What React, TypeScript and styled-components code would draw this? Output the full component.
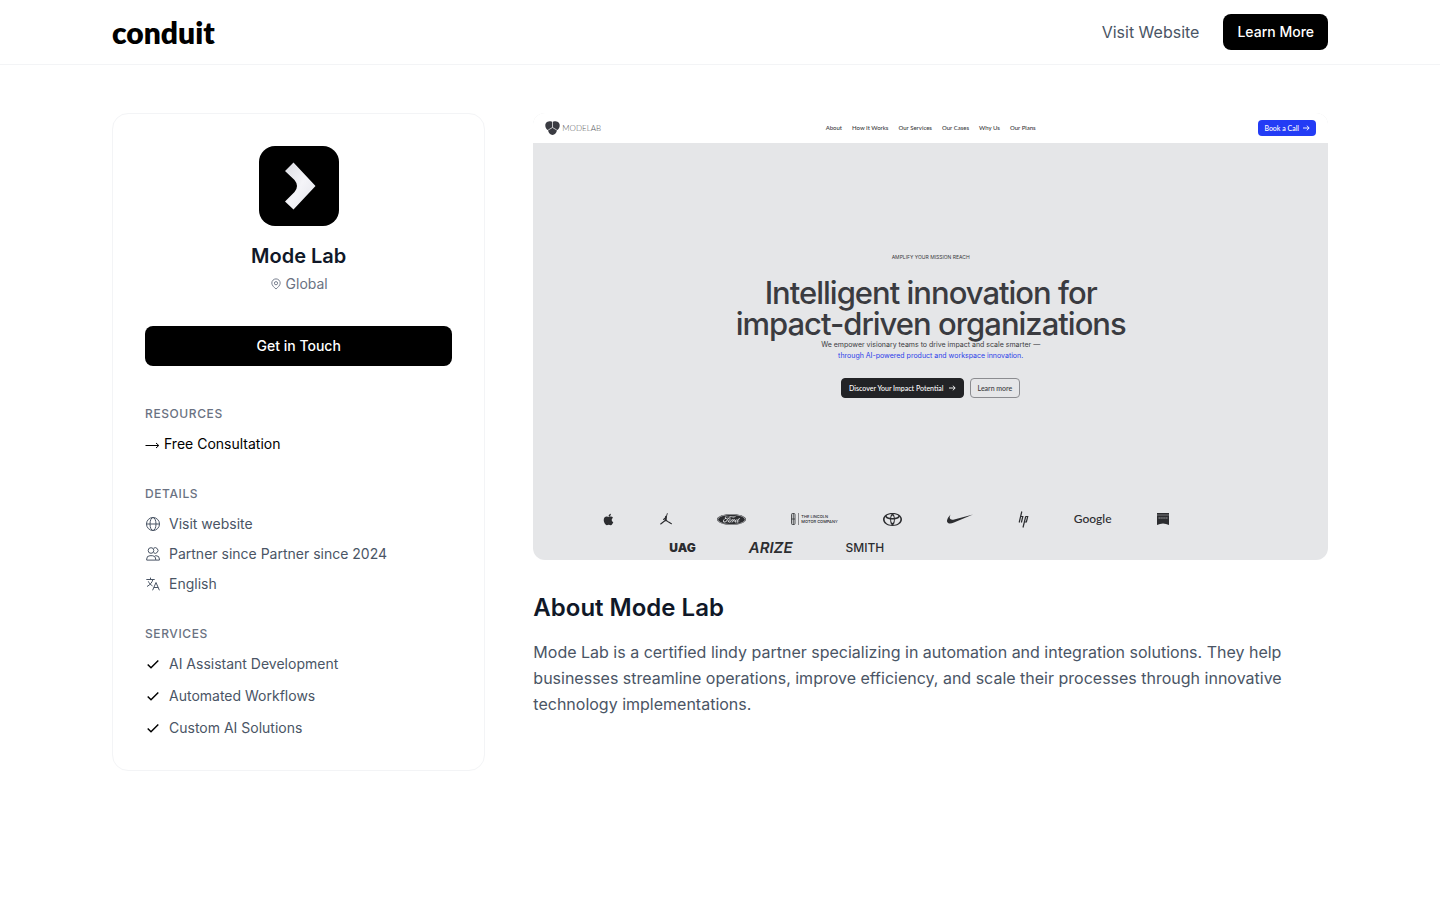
import React from "react";
import styled, { createGlobalStyle } from "styled-components";
import { FaApple } from "react-icons/fa";
import { SiFord, SiToyota, SiNike } from "react-icons/si";

const GlobalStyle = createGlobalStyle`
  *, *::before, *::after { box-sizing: border-box; }
  body {
    margin: 0;
    background: #fff;
    color: #101828;
    font-family: Inter, "Liberation Sans", sans-serif;
  }
  h1, h2, h3, p, ul { margin: 0; padding: 0; }
  ul { list-style: none; }
  a { color: inherit; text-decoration: none; }
  button { font-family: inherit; border: 0; cursor: pointer; }
  svg { display: block; flex: none; }
`;

const SiteHeader = styled.header`
  border-bottom: 1px solid #f3f4f6;
`;

const Container = styled.div`
  max-width: 1280px;
  margin: 0 auto;
  padding: 0 32px;
`;

const HeaderBar = styled(Container)`
  height: 64px;
  display: flex;
  align-items: center;
  justify-content: space-between;
`;

const Wordmark = styled.a`
  font-family: Lato, sans-serif;
  font-size: 30px;
  line-height: 32px;
  font-weight: 800;
  color: #000;
`;

const HeaderActions = styled.nav`
  display: flex;
  align-items: center;
  gap: 24px;
`;

const HeaderLink = styled.a`
  font-size: 16px;
  line-height: 24px;
  color: #4a5565;
`;

const SolidButton = styled.button<{ $wide?: boolean }>`
  width: ${(p) => (p.$wide ? "100%" : "auto")};
  height: ${(p) => (p.$wide ? "40px" : "36px")};
  padding: 0 14px;
  border-radius: 8px;
  background: #000;
  color: #fff;
  font-size: 14px;
  line-height: 20px;
  font-weight: 500;
`;

const Page = styled(Container)`
  padding-top: 48px;
  padding-bottom: 48px;
  display: grid;
  grid-template-columns: repeat(3, minmax(0, 1fr));
  gap: 48px;
  align-items: start;
`;

const ProfileCard = styled.aside`
  border: 1px solid #f3f4f6;
  border-radius: 16px;
  padding: 32px;
  display: flex;
  flex-direction: column;
  gap: 32px;
`;

const Identity = styled.div`
  display: flex;
  flex-direction: column;
  align-items: center;
`;

const Avatar = styled.div`
  width: 80px;
  height: 80px;
  border-radius: 16px;
  background: #000;
  overflow: hidden;
`;

const PartnerName = styled.h1`
  margin-top: 16px;
  font-size: 20px;
  line-height: 28px;
  font-weight: 600;
`;

const Location = styled.p`
  margin-top: 4px;
  display: flex;
  align-items: center;
  gap: 4px;
  font-size: 14px;
  line-height: 20px;
  color: #6a7282;
`;

const Group = styled.section<{ $first?: boolean }>`
  margin-top: ${(p) => (p.$first ? "8px" : "0")};
`;

const GroupTitle = styled.h3`
  margin-bottom: 12px;
  font-size: 12px;
  line-height: 16px;
  font-weight: 500;
  letter-spacing: 0.05em;
  text-transform: uppercase;
  color: #6a7282;
`;

const ItemList = styled.ul<{ $gap: number }>`
  display: flex;
  flex-direction: column;
  gap: ${(p) => p.$gap}px;
`;

const Item = styled.li`
  display: flex;
  align-items: center;
  gap: 8px;
  font-size: 14px;
  line-height: 20px;
  color: #4a5565;
`;

const ResourceLink = styled.a`
  display: flex;
  align-items: center;
  gap: 4px;
  font-size: 14px;
  line-height: 20px;
  color: #000;
`;

const Main = styled.main`
  grid-column: span 2;
`;

const Preview = styled.div`
  aspect-ratio: 16 / 9;
  border-radius: 12px;
  overflow: hidden;
  display: flex;
  flex-direction: column;
  background: #e5e6e8;
  color: #3a3b40;
`;

const PreviewBar = styled.div`
  height: 30px;
  flex: none;
  padding: 0 12px;
  display: grid;
  grid-template-columns: 1fr auto 1fr;
  align-items: center;
  background: #fff;
  font-family: Lato, sans-serif;
`;

const PreviewBrand = styled.div`
  display: flex;
  align-items: center;
  gap: 2px;
  font-size: 8px;
  line-height: 12px;
  font-weight: 300;
  color: #55565a;
`;

const PreviewNav = styled.div`
  display: flex;
  gap: 10px;
  font-size: 6px;
  line-height: 10px;
  font-weight: 500;
`;

const CallButton = styled.button`
  justify-self: end;
  height: 16px;
  padding: 0 6px;
  display: flex;
  align-items: center;
  gap: 4px;
  border-radius: 4px;
  background: #233cf5;
  color: #fff;
  font-size: 7px;
  line-height: 10px;
  font-weight: 500;
`;

const Hero = styled.div`
  padding-top: 109px;
  display: flex;
  flex-direction: column;
  align-items: center;
  text-align: center;
`;

const Eyebrow = styled.p`
  font-size: 5px;
  line-height: 10px;
`;

const Headline = styled.h2`
  margin-top: 15px;
  font-size: 31px;
  line-height: 31px;
  font-weight: 500;
  letter-spacing: -1px;
`;

const Tagline = styled.p`
  font-size: 7px;
  line-height: 11px;
`;

const Accent = styled.span`
  display: block;
  color: #2b40e8;
`;

const HeroActions = styled.div`
  margin-top: 17px;
  display: flex;
  gap: 6px;
`;

const HeroButton = styled.button<{ $outline?: boolean }>`
  height: 20px;
  padding: 0 7px;
  display: flex;
  align-items: center;
  gap: 5px;
  border: 1px solid ${(p) => (p.$outline ? "#8b8c90" : "#222326")};
  border-radius: 4px;
  background: ${(p) => (p.$outline ? "transparent" : "#222326")};
  color: ${(p) => (p.$outline ? "#3a3b40" : "#fff")};
  font-family: Lato, sans-serif;
  font-size: 7px;
  line-height: 10px;
  font-weight: 500;
`;

const Clients = styled.div`
  margin-top: 112px;
  display: flex;
  flex-direction: column;
  gap: 14px;
  color: #2c2d30;
`;

const ClientRow = styled.div<{ $indent: number; $gap: number; $height: number }>`
  height: ${(p) => p.$height}px;
  padding-left: ${(p) => p.$indent}px;
  display: flex;
  align-items: center;
  gap: ${(p) => p.$gap}px;
`;

const LincolnName = styled.span`
  font-size: 4px;
  line-height: 5px;
  font-weight: 500;
`;

const Lincoln = styled.span`
  display: flex;
  align-items: center;
  gap: 2px;
`;

const ClientName = styled.span<{ $size: number; $italic?: boolean; $weight: number; $family?: string }>`
  font-family: ${(p) => p.$family || "Inter"}, sans-serif;
  font-size: ${(p) => p.$size}px;
  line-height: 12px;
  font-weight: ${(p) => p.$weight};
  font-style: ${(p) => (p.$italic ? "italic" : "normal")};
`;

const AboutTitle = styled.h2`
  margin-top: 32px;
  font-size: 24px;
  line-height: 32px;
  font-weight: 600;
`;

const AboutText = styled.p`
  margin-top: 15px;
  font-size: 16px;
  line-height: 26px;
  color: #4a5565;
`;

const PinIcon = () => (
  <svg width="12" height="12" viewBox="0 0 12 12" fill="none" stroke="currentColor" strokeWidth="0.9">
    <path d="M6 11C4.2 9.4 1.8 7.4 1.8 5.1a4.2 4.2 0 0 1 8.4 0C10.2 7.4 7.8 9.4 6 11Z" />
    <circle cx="6" cy="5.2" r="1.6" />
  </svg>
);

const GlobeIcon = () => (
  <svg width="16" height="16" viewBox="0 0 16 16" fill="none" stroke="currentColor">
    <circle cx="8" cy="8" r="6.5" />
    <ellipse cx="8" cy="8" rx="3" ry="6.5" />
    <path d="M1.5 8h13" />
  </svg>
);

const PeopleIcon = () => (
  <svg width="16" height="16" viewBox="0 0 16 16" fill="none" stroke="currentColor" strokeLinejoin="round">
    <circle cx="6" cy="4.5" r="2.8" />
    <path d="M8.6 2.2a2.8 2.8 0 1 1 0 4.6" />
    <path d="M1.7 14.1v-1.1A3.300 3.300 0 0 1 5 9.700h2.400a3.300 3.300 0 0 1 3.300 3.300v1.100Z" />
    <path d="M10.700 14.100h3.700v-1.100a3.300 3.300 0 0 0-3.300-3.300h-.9" />
  </svg>
);

const TranslateIcon = () => (
  <svg width="16" height="16" viewBox="0 0 16 16" fill="none" stroke="currentColor">
    <path d="M1.3 3.5h8.400M5.500 1.600v1.900M7.900 3.500C7.200 6.600 4.900 8.900 2 10.500M3.300 5.300c.9 2 2.300 3.500 4.200 4.600" />
    <path d="M7.600 14.300l3.400-7.800 3.400 7.800M8.800 11.500h4.400" />
  </svg>
);

const CheckIcon = () => (
  <svg width="16" height="16" viewBox="0 0 16 16" fill="none" stroke="#000" strokeWidth="1.5">
    <path d="M2.700 8.500l3.300 3.200 7.300-7.200" />
  </svg>
);

const ResourceArrow = () => (
  <svg width="15" height="12" viewBox="0 0 15 12" fill="none" stroke="currentColor">
    <path d="M0.500 7.500h13M11 5l2.800 2.500L11 10" />
  </svg>
);

const SmallArrow = () => (
  <svg width="7" height="6" viewBox="0 0 7 6" fill="none" stroke="currentColor" strokeWidth="0.9">
    <path d="M0 3h6M3.800 0.700L6.200 3 3.800 5.300" />
  </svg>
);

const ModeLabMark = () => (
  <svg width="80" height="80" viewBox="0 0 80 80">
    <defs>
      <linearGradient id="markShade" x1="0" y1="0" x2="1" y2="1">
        <stop offset="0" stopColor="#dcdde3" />
        <stop offset="0.5" stopColor="#f4f4f8" />
        <stop offset="1" stopColor="#e2e3ea" />
      </linearGradient>
    </defs>
    <path d="M34.500 16.500L56.500 40 34.500 63.500 26 55.500 35.500 46Q40.500 40 35.500 34L26 25Z" fill="url(#markShade)" />
  </svg>
);

const TrefoilMark = () => (
  <svg width="15" height="14" viewBox="0 0 15 14">
    <path
      d="M4.500 0.300Q6.400 0 7.500 0.900 8.600 0 10.500 0.300C13.600 0.400 15 2.600 14.700 5 14.500 7.400 13 8.700 12 9.100 11.600 12.300 9.800 13.900 7.500 13.900S3.400 12.300 3 9.100C2 8.700 0.500 7.400 0.300 5 0 2.600 1.400 0.400 4.500 0.300Z"
      fill="#3a3b42"
    />
    <path d="M7.500 0.500v6M7.500 6.500L3.200 9M7.500 6.500L11.800 9" stroke="#fff" strokeWidth="0.7" />
  </svg>
);

const JumpmanMark = () => (
  <svg width="12" height="12" viewBox="0 0 12 12" fill="none" stroke="currentColor" strokeLinecap="round">
    <path d="M7.300 0.600L6.200 4" strokeWidth="0.9" />
    <path d="M6 3.600L5.700 7.300" strokeWidth="1.9" />
    <path d="M5.500 7.300L0.700 11M6 7.300l2.600 1.800 2.800 1.600M5.300 5L3.600 6.500" strokeWidth="1.1" />
  </svg>
);

const LincolnMark = () => (
  <svg width="8" height="12" viewBox="0 0 8 12" fill="none" stroke="currentColor">
    <rect x="0.5" y="0.5" width="3.5" height="11" rx="1" strokeWidth="0.8" />
    <path d="M2.250 0.500v11M0.500 6h3.500" strokeWidth="0.8" />
    <path d="M7.500 0v12" strokeWidth="0.5" />
  </svg>
);

const HpMark = () => (
  <svg width="11" height="17" viewBox="0 0 11 17" fill="none" stroke="currentColor" strokeWidth="1.2">
    <path d="M3.800 0.500L1.200 11.500M2.800 5.500h2L3.400 11.500M7.700 5.500L5 16.500M7.700 5.500h2L8.400 11H6.500" />
  </svg>
);

const ZeissMark = () => (
  <svg width="12" height="12" viewBox="0 0 12 12">
    <path d="M0 0h12v12Q6 9 0 12Z" fill="currentColor" />
    <path d="M0 2h12" stroke="#e5e6e8" strokeWidth="0.4" />
    <path d="M1.500 5h9" stroke="#a4a5a8" strokeWidth="1.2" strokeDasharray="1.4 0.5" />
  </svg>
);

const navItems = ["About", "How It Works", "Our Services", "Our Cases", "Why Us", "Our Plans"];
const services = ["AI Assistant Development", "Automated Workflows", "Custom AI Solutions"];

export default function App() {
  return (
    <>
      <GlobalStyle />
      <SiteHeader>
        <HeaderBar>
          <Wordmark href="#">conduit</Wordmark>
          <HeaderActions>
            <HeaderLink href="#">Visit Website</HeaderLink>
            <SolidButton>Learn More</SolidButton>
          </HeaderActions>
        </HeaderBar>
      </SiteHeader>
      <Page>
        <ProfileCard>
          <Identity>
            <Avatar>
              <ModeLabMark />
            </Avatar>
            <PartnerName>Mode Lab</PartnerName>
            <Location>
              <PinIcon />
              Global
            </Location>
          </Identity>
          <SolidButton $wide>Get in Touch</SolidButton>
          <Group $first>
            <GroupTitle>Resources</GroupTitle>
            <ResourceLink href="#">
              <ResourceArrow />
              Free Consultation
            </ResourceLink>
          </Group>
          <Group>
            <GroupTitle>Details</GroupTitle>
            <ItemList $gap={10}>
              <Item>
                <GlobeIcon />
                <a href="#">Visit website</a>
              </Item>
              <Item>
                <PeopleIcon />
                Partner since Partner since 2024
              </Item>
              <Item>
                <TranslateIcon />
                English
              </Item>
            </ItemList>
          </Group>
          <Group>
            <GroupTitle>Services</GroupTitle>
            <ItemList $gap={12}>
              {services.map((s) => (
                <Item key={s}>
                  <CheckIcon />
                  {s}
                </Item>
              ))}
            </ItemList>
          </Group>
        </ProfileCard>
        <Main>
          <Preview>
            <PreviewBar>
              <PreviewBrand>
                <TrefoilMark />
                MODELAB
              </PreviewBrand>
              <PreviewNav>
                {navItems.map((n) => (
                  <a key={n} href="#">
                    {n}
                  </a>
                ))}
              </PreviewNav>
              <CallButton>
                Book a Call
                <SmallArrow />
              </CallButton>
            </PreviewBar>
            <Hero>
              <Eyebrow>AMPLIFY YOUR MISSION REACH</Eyebrow>
              <Headline>
                Intelligent innovation for
                <br />
                impact-driven organizations
              </Headline>
              <Tagline>
                We empower visionary teams to drive impact and scale smarter —
                <Accent>through AI-powered product and workspace innovation.</Accent>
              </Tagline>
              <HeroActions>
                <HeroButton>
                  Discover Your Impact Potential
                  <SmallArrow />
                </HeroButton>
                <HeroButton $outline>Learn more</HeroButton>
              </HeroActions>
            </Hero>
            <Clients>
              <ClientRow $indent={69} $gap={45} $height={18}>
                <FaApple size={13} />
                <JumpmanMark />
                <SiFord size={29} />
                <Lincoln>
                  <LincolnMark />
                  <LincolnName>
                    THE LINCOLN
                    <br />
                    MOTOR COMPANY
                  </LincolnName>
                </Lincoln>
                <SiToyota size={19} />
                <SiNike size={26} />
                <HpMark />
                <ClientName $size={12} $weight={500} $family="Lato">
                  Google
                </ClientName>
                <ZeissMark />
              </ClientRow>
              <ClientRow $indent={136} $gap={53} $height={12}>
                <ClientName $size={12} $weight={900}>
                  UAG
                </ClientName>
                <ClientName $size={15} $weight={600} $italic>
                  ARIZE
                </ClientName>
                <ClientName $size={12} $weight={500}>
                  SMITH
                </ClientName>
              </ClientRow>
            </Clients>
          </Preview>
          <AboutTitle>About Mode Lab</AboutTitle>
          <AboutText>
            Mode Lab is a certified lindy partner specializing in automation and integration
            solutions. They help businesses streamline operations, improve efficiency, and scale
            their processes through innovative technology implementations.
          </AboutText>
        </Main>
      </Page>
    </>
  );
}
